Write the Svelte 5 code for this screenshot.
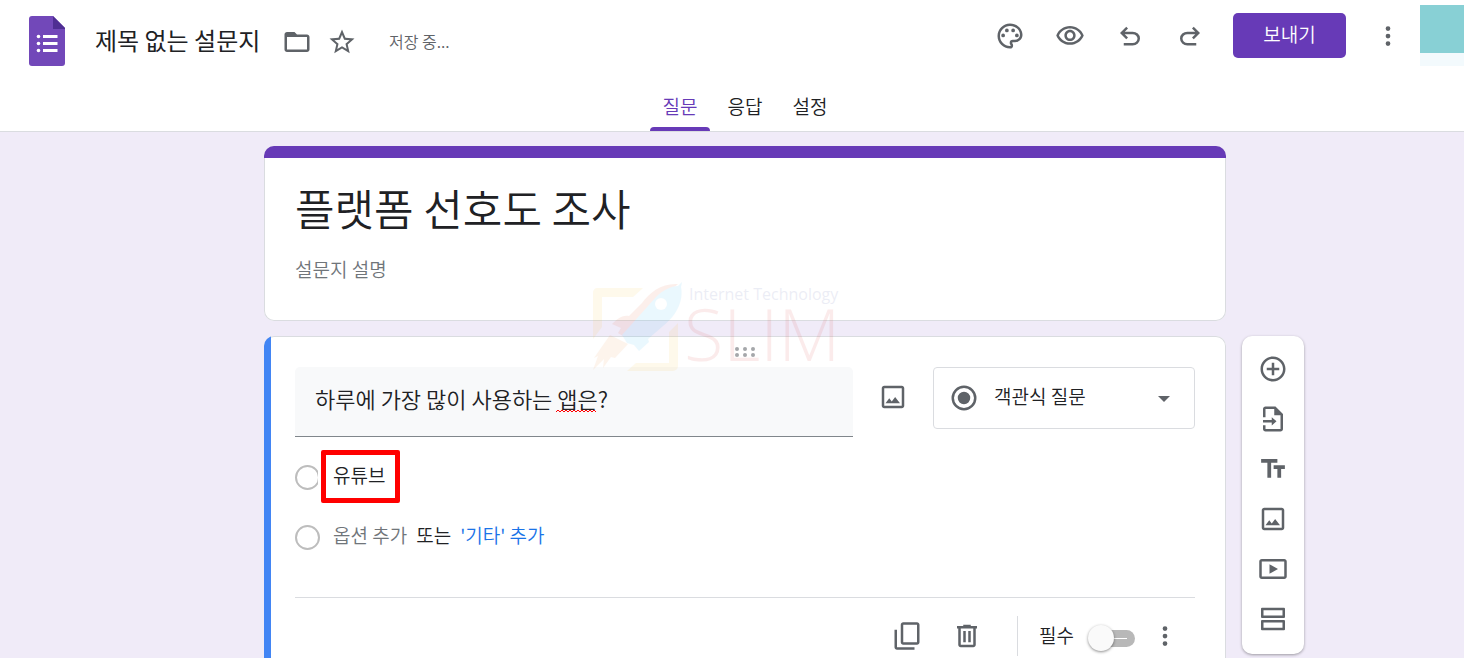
<script lang="ts">
	type IconName = keyof typeof icons;

	const icons = {
		folder:
			'M20 6h-8l-2-2H4c-1.1 0-2 .9-2 2v12c0 1.1.9 2 2 2h16c1.1 0 2-.9 2-2V8c0-1.1-.9-2-2-2zm0 12H4V8h16v10z',
		star: 'M22 9.24l-7.19-.62L12 2 9.19 8.63 2 9.24l5.46 4.73L5.82 21 12 17.27 18.18 21l-1.63-7.03L22 9.24zM12 15.4l-3.76 2.27 1-4.28-3.32-2.88 4.38-.38L12 6.1l1.71 4.04 4.38.38-3.32 2.88 1 4.28L12 15.4z',
		palette:
			'M12 22C6.49 22 2 17.51 2 12S6.49 2 12 2s10 4.04 10 9c0 3.31-2.69 6-6 6h-1.77c-.28 0-.5.22-.5.5 0 .12.05.23.13.33.41.47.64 1.06.64 1.67A2.5 2.5 0 0 1 12 22zm0-18c-4.41 0-8 3.59-8 8s3.59 8 8 8c.28 0 .5-.22.5-.5a.54.54 0 0 0-.14-.35c-.41-.46-.63-1.05-.63-1.65a2.5 2.5 0 0 1 2.5-2.5H16c2.21 0 4-1.79 4-4 0-3.86-3.59-7-8-7zM5 11.5a1.5 1.5 0 1 0 3 0a1.5 1.5 0 1 0-3 0zM8 7.5a1.5 1.5 0 1 0 3 0a1.5 1.5 0 1 0-3 0zM13 7.5a1.5 1.5 0 1 0 3 0a1.5 1.5 0 1 0-3 0zM16 11.5a1.5 1.5 0 1 0 3 0a1.5 1.5 0 1 0-3 0z',
		eye: 'M12 6c3.79 0 7.17 2.13 8.82 5.5C19.17 14.87 15.79 17 12 17s-7.17-2.13-8.82-5.5C4.83 8.13 8.21 6 12 6m0-2C7 4 2.73 7.11 1 11.5 2.73 15.89 7 19 12 19s9.27-3.11 11-7.5C21.27 7.11 17 4 12 4zm0 5c1.38 0 2.5 1.12 2.5 2.5S13.38 14 12 14s-2.5-1.12-2.5-2.5S10.62 9 12 9m0-2c-2.48 0-4.5 2.02-4.5 4.5S9.52 16 12 16s4.5-2.02 4.5-4.5S14.48 7 12 7z',
		undo: 'M7 19.5v-2h7.1q1.575 0 2.738-1T18 14t-1.162-2.5T14.1 10.5H7.8l2.6 2.6L9 14.5l-5-5 5-5 1.4 1.4L7.8 8.5h6.3q2.425 0 4.163 1.575T20 14t-1.737 3.925T14.1 19.5z',
		redo: 'M17 19.5v-2H9.9q-1.575 0-2.738-1T6 14t1.162-2.5T9.9 10.5h6.3l-2.6 2.6L15 14.5l5-5-5-5-1.4 1.4L16.2 8.5H9.9q-2.425 0-4.163 1.575T4 14t1.737 3.925T9.9 19.5z',
		more: 'M10.1 6a1.9 1.9 0 1 0 3.8 0a1.9 1.9 0 1 0-3.8 0zM10.1 12a1.9 1.9 0 1 0 3.8 0a1.9 1.9 0 1 0-3.8 0zM10.1 18a1.9 1.9 0 1 0 3.8 0a1.9 1.9 0 1 0-3.8 0z',
		image:
			'M19 5v14H5V5h14m0-2H5c-1.1 0-2 .9-2 2v14c0 1.1.9 2 2 2h14c1.1 0 2-.9 2-2V5c0-1.1-.9-2-2-2zM6 17l3-4 2 2.6 2.7-3.6 3.9 5z',
		radio: 'M12 2a10 10 0 1 0 0 20a10 10 0 1 0 0-20zm0 2a8 8 0 1 1 0 16a8 8 0 1 1 0-16zm0 3a5 5 0 1 0 0 10a5 5 0 1 0 0-10z',
		add: 'M13 7h-2v4H7v2h4v4h2v-4h4v-2h-4V7zm-1-5C6.48 2 2 6.48 2 12s4.48 10 10 10 10-4.48 10-10S17.52 2 12 2zm0 18c-4.41 0-8-3.59-8-8s3.59-8 8-8 8 3.59 8 8-3.59 8-8 8z',
		importFile:
			'M4 10.5V4c0-1.1.9-2 2-2h8l6 6v12c0 1.1-.9 2-2 2H6c-1.1 0-2-.9-2-2v-3h2v3h12V9h-5V4H6v6.5zM4 12.8h7v-2.3l3.8 3.3-3.8 3.3v-2.3H4z',
		text: 'M2.5 4v3h5v12h3V7h5V4h-13zm19 5h-9v3h3v7h3v-7h3V9z',
		video: 'M3 4h18c1.1 0 2 .9 2 2v12c0 1.1-.9 2-2 2H3c-1.1 0-2-.9-2-2V6c0-1.1.9-2 2-2zm0 2v12h18V6zM9.2 8.2v7.6L16 12z',
		section:
			'M3.2 3H20.8a.8 .8 0 0 1 .8.8V10.4a.8 .8 0 0 1-.8.8H3.2a.8 .8 0 0 1-.8-.8V3.8a.8 .8 0 0 1 .8-.8zM4.4 5v4.2h15.2V5zM3.2 12.8H20.8a.8 .8 0 0 1 .8.8v6.6a.8 .8 0 0 1-.8.8H3.2a.8 .8 0 0 1-.8-.8v-6.6a.8 .8 0 0 1 .8-.8zM4.4 14.8V19h15.2v-4.2z',
		copy: 'M9 1h11c1.1 0 2 .9 2 2v14c0 1.1-.9 2-2 2H9c-1.1 0-2-.9-2-2V3c0-1.1.9-2 2-2zm0 2v14h11V3zM2 7v14c0 1.1.9 2 2 2h14v-2H4V7z',
		trash: 'M15 4V3H9v1H4v2h1v13c0 1.1.9 2 2 2h10c1.1 0 2-.9 2-2V6h1V4h-5zm2 15H7V6h10v13zM9 8h2v9H9zm4 0h2v9h-2z'
	};

	const actions: { icon: IconName; label: string }[] = [
		{ icon: 'palette', label: '테마 맞춤설정' },
		{ icon: 'eye', label: '미리보기' },
		{ icon: 'undo', label: '실행취소' },
		{ icon: 'redo', label: '재실행' }
	];

	const tools: { icon: IconName; label: string }[] = [
		{ icon: 'add', label: '질문 추가' },
		{ icon: 'importFile', label: '질문 가져오기' },
		{ icon: 'text', label: '제목 및 설명 추가' },
		{ icon: 'image', label: '이미지 추가' },
		{ icon: 'video', label: '동영상 추가' },
		{ icon: 'section', label: '섹션 추가' }
	];

	const tabs = ['질문', '응답', '설정'];

	let activeTab = $state('질문');
	let docName = $state('제목 없는 설문지');
	let formTitle = $state('플랫폼 선호도 조사');
	let description = $state('');
	let question = $state('하루에 가장 많이 사용하는 앱은?');
	let option = $state('유튜브');
	let required = $state(false);
</script>

{#snippet icon(name: IconName)}
	<svg class="icon" viewBox="0 0 24 24" aria-hidden="true">
		<path fill-rule="evenodd" d={icons[name]} />
	</svg>
{/snippet}

<div class="app">
	<header>
		<div class="bar">
			<div class="doc">
				<svg class="logo" viewBox="0 0 36 50" aria-hidden="true">
					<path fill="#7248b9" d="M3 0h21l12 12v35a3 3 0 0 1-3 3H3a3 3 0 0 1-3-3V3a3 3 0 0 1 3-3z" />
					<path fill="#4f2e93" d="M24 0l12 12v1H24z" />
					<g fill="#fff">
						<circle cx="9.5" cy="20.5" r="1.8" />
						<circle cx="9.5" cy="27.5" r="1.8" />
						<circle cx="9.5" cy="34.5" r="1.8" />
						<path d="M14 19h14.5v3H14zM14 26h14.5v3H14zM14 33h14.5v3H14z" />
					</g>
				</svg>
				<input class="doc-name" aria-label="문서 이름" bind:value={docName} />
				<button class="icon-btn narrow" aria-label="폴더로 이동">{@render icon('folder')}</button>
				<button class="icon-btn narrow" aria-label="별표">{@render icon('star')}</button>
				<span class="saving">저장 중...</span>
			</div>
			<div class="actions">
				{#each actions as action (action.icon)}
					<button class="icon-btn" aria-label={action.label}>{@render icon(action.icon)}</button>
				{/each}
				<button class="send">보내기</button>
				<button class="icon-btn" aria-label="더보기">{@render icon('more')}</button>
				<button class="avatar" aria-label="계정"></button>
			</div>
		</div>
		<div class="tabs" role="tablist">
			{#each tabs as tab (tab)}
				<button
					role="tab"
					class:active={activeTab === tab}
					aria-selected={activeTab === tab}
					onclick={() => (activeTab = tab)}>{tab}</button
				>
			{/each}
		</div>
	</header>

	<main>
		<section class="card title-card">
			<input class="form-title" aria-label="설문지 제목" bind:value={formTitle} />
			<input
				class="description"
				aria-label="설문지 설명"
				placeholder="설문지 설명"
				bind:value={description}
			/>
		</section>

		<section class="card question-card">
			<svg class="drag" viewBox="0 0 20 12" aria-hidden="true">
				{#each [2, 10, 18] as cx (cx)}
					<circle {cx} cy="3" r="2" />
					<circle {cx} cy="9" r="2" />
				{/each}
			</svg>

			<div class="question-row">
				<div class="question">
					<input aria-label="질문" spellcheck="false" bind:value={question} />
					<svg class="squiggle" viewBox="0 0 40 4" aria-hidden="true">
						<path
							d="M0 3l2-2 2 2 2-2 2 2 2-2 2 2 2-2 2 2 2-2 2 2 2-2 2 2 2-2 2 2 2-2 2 2 2-2 2 2 2-2 2 2"
						/>
					</svg>
				</div>
				<button class="icon-btn wide" aria-label="이미지 추가">{@render icon('image')}</button>
				<div class="type">
					{@render icon('radio')}
					<select aria-label="질문 유형">
						<option>객관식 질문</option>
						<option>체크박스</option>
						<option>드롭다운</option>
					</select>
					<svg class="arrow" viewBox="0 0 12 6" aria-hidden="true"><path d="M0 0h12L6 6z" /></svg>
				</div>
			</div>

			<div class="option-row">
				<input type="radio" aria-label="옵션 1" disabled />
				<div class="marked">
					<input class="option-text" aria-label="옵션 1 내용" bind:value={option} />
				</div>
			</div>
			<div class="option-row">
				<input type="radio" aria-label="새 옵션" disabled />
				<div class="add-row">
					<button class="add-option">옵션 추가</button>
					<span>또는</span>
					<button class="add-other">'기타' 추가</button>
				</div>
			</div>

			<footer>
				<button class="icon-btn" aria-label="복사">{@render icon('copy')}</button>
				<button class="icon-btn" aria-label="삭제">{@render icon('trash')}</button>
				<label class="required">
					<span>필수</span>
					<input type="checkbox" role="switch" bind:checked={required} />
				</label>
				<button class="icon-btn" aria-label="옵션 더보기">{@render icon('more')}</button>
			</footer>
		</section>

		<aside>
			{#each tools as tool (tool.icon)}
				<button aria-label={tool.label}>{@render icon(tool.icon)}</button>
			{/each}
		</aside>

		<svg class="watermark" viewBox="0 0 248 92" aria-hidden="true">
			<g fill="#fbc02d">
				<path d="M6 6h46l-10 9H11v30l-9 12V11a5 5 0 0 1 4-5z" />
				<path d="M87 41v43a5 5 0 0 1-5 5H36l9-8h33V50z" />
			</g>
			<path
				fill="#e8572a"
				d="M87 2c-16-1-28 8-36 19L38 34c-8-1-11 3-17 8l9 4-3 5 8 5 45-48z"
			/>
			<path fill="#f08a3c" d="M19 53l18 9-13 14-4-1-8 11 1-9-11 11 5-14-4 2z" />
			<path
				fill="#29b6f6"
				d="M91 0l-1 5c3 15-6 30-18 39L57 57l1 3-10 9-5-6-7-2-5-8 34-38C72 8 80 4 87 4z"
			/>
			<circle cx="70" cy="22" r="6" fill="#fff" />
			<text class="mark-small" x="98" y="18">Internet Technology</text>
			<text class="mark-large" x="93" y="79">SLIM</text>
		</svg>
	</main>
</div>

<style>
	:global(body) {
		margin: 0;
	}
	.app {
		--purple: #673ab7;
		--ink: #202124;
		--gray: #5f6368;
		--line: #dadce0;
		display: flex;
		flex-direction: column;
		height: 100vh;
		background: #f0ebf8;
		color: var(--ink);
		font-family: 'Noto Sans CJK KR', sans-serif;
		font-size: 19px;
		font-weight: 350;
	}
	button,
	input,
	select {
		box-sizing: border-box;
		margin: 0;
		padding: 0;
		border: 0;
		background: none;
		color: inherit;
		font: inherit;
	}
	button {
		cursor: pointer;
	}
	.icon {
		display: block;
		flex: none;
		width: 30px;
		height: 30px;
		fill: var(--gray);
	}
	.icon-btn {
		display: flex;
		flex: none;
		align-items: center;
		justify-content: center;
		width: 60px;
		height: 48px;
	}
	.icon-btn.narrow {
		width: 45px;
	}
	.icon-btn.wide {
		width: 80px;
		height: 60px;
	}

	header {
		flex: none;
		background: #fff;
		border-bottom: 1px solid var(--line);
	}
	.bar {
		display: flex;
		justify-content: space-between;
		height: 83px;
	}
	.doc,
	.actions {
		display: flex;
		align-items: center;
	}
	.doc {
		padding-left: 29px;
	}
	.logo {
		width: 36px;
		height: 50px;
		margin-bottom: 2px;
	}
	.doc-name {
		width: 170px;
		height: 40px;
		margin: 0 9px 0 30px;
		padding-bottom: 4px;
		font-size: 24px;
		font-weight: 400;
	}
	.saving {
		margin-left: 25px;
		padding-bottom: 2px;
		color: var(--gray);
		font-size: 16px;
	}
	.actions {
		padding-bottom: 12px;
	}
	.send {
		width: 113px;
		height: 45px;
		margin: 0 12px 0 13px;
		padding-bottom: 5px;
		border-radius: 5px;
		background: var(--purple);
		color: #fff;
	}
	.avatar {
		width: 44px;
		height: 61px;
		margin-left: 2px;
		background: #88d0d5;
		border-bottom: 13px solid #f3fafd;
	}
	.tabs {
		display: flex;
		justify-content: center;
		gap: 5px;
		padding-left: 26px;
	}
	.tabs button {
		position: relative;
		width: 60px;
		height: 48px;
		padding-bottom: 4px;
	}
	.tabs .active {
		color: var(--purple);
	}
	.tabs .active::after {
		content: '';
		position: absolute;
		left: 0;
		right: 0;
		bottom: 0;
		height: 4px;
		border-radius: 4px 4px 0 0;
		background: var(--purple);
	}

	main {
		position: relative;
		flex: 1;
		display: grid;
		grid-template-columns: 1fr minmax(0, 962px) 1fr;
		grid-auto-rows: max-content;
		row-gap: 15px;
		min-height: 0;
		padding: 14px 0 15px 26px;
		overflow: auto;
		scrollbar-width: none;
	}
	/* inset line instead of a border, so the colour strips reach the card's edge */
	.card {
		position: relative;
		grid-column: 2;
		box-sizing: border-box;
		background: #fff;
		box-shadow: inset 0 0 0 1px var(--line);
		border-radius: 10px;
		overflow: hidden;
	}
	.title-card {
		display: flex;
		flex-direction: column;
		gap: 10px;
		padding: 29px 31px 34px;
	}
	.title-card::before {
		content: '';
		position: absolute;
		inset: 0 0 auto;
		height: 12px;
		background: var(--purple);
	}
	.form-title {
		height: 64px;
		font-size: 43px;
	}
	.description {
		height: 38px;
	}
	.description::placeholder {
		color: #70757a;
		opacity: 1;
	}

	.question-card {
		padding: 10px 31px;
	}
	.question-card::before {
		content: '';
		position: absolute;
		inset: 0 auto 0 0;
		width: 7px;
		background: #4285f4;
	}
	.drag {
		display: block;
		width: 20px;
		height: 12px;
		margin: 0 auto 9px;
		fill: #a5a7aa;
	}
	.question-row {
		display: flex;
		align-items: flex-start;
	}
	.question {
		position: relative;
		flex: 1;
	}
	.question input {
		width: 100%;
		height: 70px;
		padding: 0 20px 8px;
		border-bottom: 1px solid #80868b;
		border-radius: 5px 5px 0 0;
		background: #f8f9fa;
		font-size: 22px;
	}
	.squiggle {
		position: absolute;
		left: 261px;
		top: 42px;
		width: 40px;
		height: 4px;
		fill: none;
		stroke: #f00;
	}
	.type {
		position: relative;
		display: flex;
		align-items: center;
		box-sizing: border-box;
		width: 262px;
		height: 62px;
		padding-left: 15px;
		border: 1px solid var(--line);
		border-radius: 4px;
	}
	.type select {
		flex: 1;
		height: 60px;
		padding: 0 40px 5px 15px;
		appearance: none;
	}
	.arrow {
		position: absolute;
		right: 24px;
		top: 28px;
		width: 12px;
		height: 6px;
		fill: var(--gray);
		pointer-events: none;
	}
	.option-row {
		display: flex;
		align-items: center;
		height: 60px;
	}
	.question-row + .option-row {
		margin-top: 10px;
	}
	.option-row input[type='radio'] {
		flex: none;
		width: 25px;
		height: 25px;
		appearance: none;
		border: 2px solid #bdbdbd;
		border-radius: 50%;
	}
	/* highlight drawn around the answer, slightly over the radio */
	.marked {
		box-sizing: border-box;
		width: 79px;
		height: 53px;
		margin: 0 0 2px 1px;
		border: 5px solid #f00;
		border-radius: 2px;
		background: #fff;
		box-shadow: -3px 0 0 #fff;
	}
	.option-text {
		width: 100%;
		height: 43px;
		padding: 0 0 3px 7px;
	}
	.add-row {
		display: flex;
		gap: 9px;
		padding: 0 0 6px 13px;
	}
	.add-option {
		color: #70757a;
	}
	.add-other {
		color: #1a73e8;
	}
	footer {
		display: flex;
		align-items: center;
		justify-content: flex-end;
		height: 76px;
		margin-top: 30px;
		border-top: 1px solid var(--line);
	}
	.required {
		display: flex;
		align-items: center;
		gap: 14px;
		height: 40px;
		margin-left: 20px;
		padding-left: 21px;
		border-left: 1px solid var(--line);
	}
	.required span {
		padding-bottom: 3px;
	}
	.required input {
		position: relative;
		width: 47px;
		height: 26px;
		margin-top: 4px;
		appearance: none;
	}
	.required input::before {
		content: '';
		position: absolute;
		inset: 5px 0 4px 6px;
		border-radius: 9px;
		background: linear-gradient(#fff, #fff) 20px center / 13px 1px no-repeat #b8b8b8;
	}
	.required input::after {
		content: '';
		position: absolute;
		left: 0;
		top: 0;
		width: 26px;
		height: 26px;
		border-radius: 50%;
		background: #fafafa;
		box-shadow: 0 1px 3px rgba(0, 0, 0, 0.45);
	}
	.required input:checked::after {
		left: 21px;
		background: var(--purple);
	}

	aside {
		grid-column: 3;
		grid-row: 2;
		align-self: start;
		display: flex;
		flex-direction: column;
		width: 62px;
		margin-left: 16px;
		padding: 8px 0 10px;
		border-radius: 10px;
		background: #fff;
		box-shadow: 0 1px 3px rgba(0, 0, 0, 0.35);
	}
	aside button {
		display: flex;
		align-items: center;
		justify-content: center;
		height: 50px;
	}

	.watermark {
		position: absolute;
		left: calc(50% - 141px);
		top: 150px;
		width: 248px;
		height: 92px;
		overflow: visible;
		opacity: 0.09;
		pointer-events: none;
	}
	.mark-small {
		fill: #34439a;
		font: 400 16px 'Open Sans', sans-serif;
	}
	.mark-large {
		fill: #d92b2b;
		font: 300 72px 'Open Sans', sans-serif;
	}
</style>
